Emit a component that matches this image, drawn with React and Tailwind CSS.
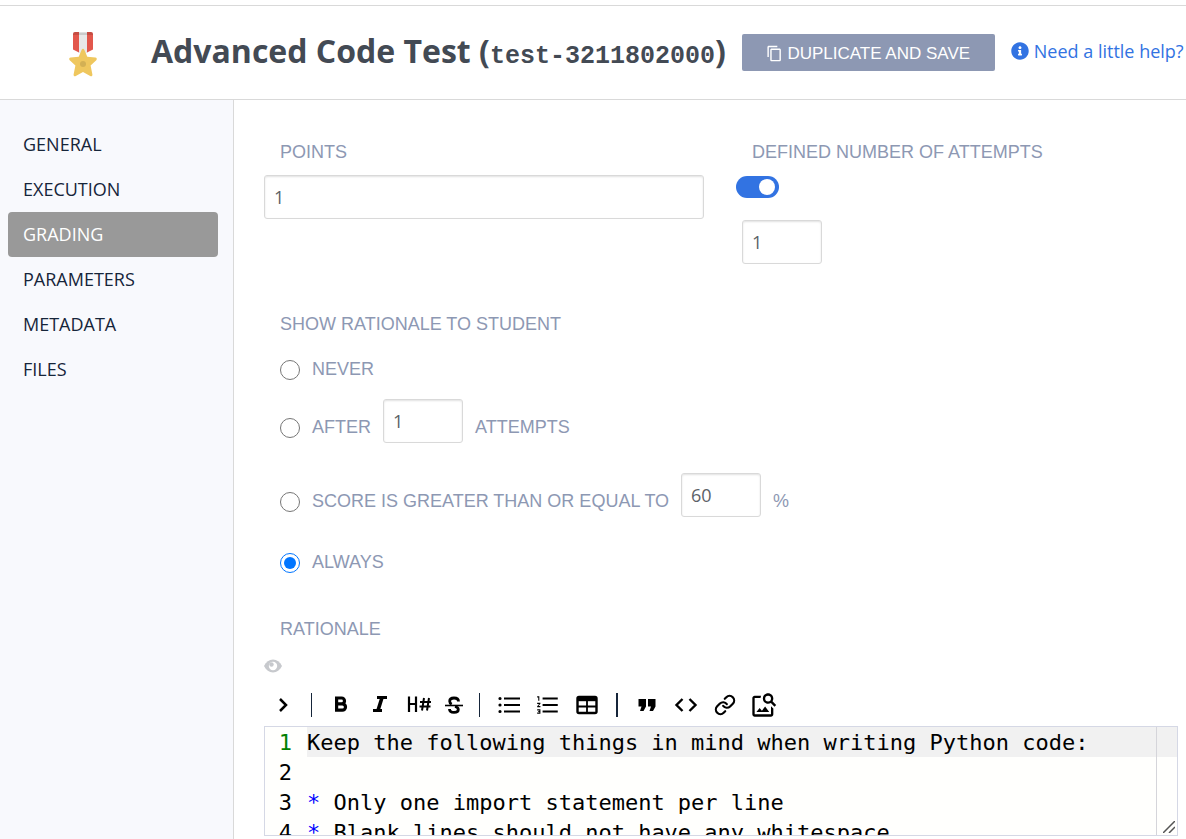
import React, { useState } from "react";
import { MdContentCopy, MdFormatListNumbered, MdImageSearch } from "react-icons/md";
import { FaInfoCircle } from "react-icons/fa";
import { FiLink } from "react-icons/fi";

const NAV = ["General", "Execution", "Grading", "Parameters", "Metadata", "Files"];

const LINES = [
  { text: "Keep the following things in mind when writing Python code:" },
  { text: "" },
  { bullet: true, text: " Only one import statement per line" },
  { bullet: true, text: " Blank lines should not have any whitespace" },
];

const LABEL = "font-['Liberation_Sans',Arial,sans-serif] text-lg leading-6 uppercase text-[#8d98b3]";
const RADIO = "mt-0.5 h-5 w-5 accent-[#0075ff]";
const FIELD =
  "h-11 rounded-[3px] border border-[#d9d9d9] bg-white px-[9px] text-lg text-[#5c6268] shadow-[inset_0_1px_2px_rgba(0,0,0,0.12)] outline-none";

function Medal() {
  return (
    <svg className="mt-1 h-12 w-8" viewBox="0 0 32 48" aria-hidden="true">
      <path d="M8 2h16v16.500l-5 4h-6l-5-4z" fill="#e8e8e8" />
      <path d="M6 3a2 2 0 0 1 2-2h4v20.500L6 18.500zM26 3a2 2 0 0 0-2-2h-4v20.500l6-3z" fill="#e2574c" />
      <path d="M6 3a2 2 0 0 1 2-2h16a2 2 0 0 1 2 2v1H6z" fill="#000" opacity=".12" />
      <path
        d="M14.700 18.800c.600-1.400 2-1.400 2.600 0l3 7 8 .8c1.500.2 2 1.600 1 2.600l-5.700 5.200 1.800 9.200c.2 1.500-1 2.200-2.200 1.500L16 41l-7.200 4.100c-1.200.7-2.400 0-2.200-1.500l1.800-9.200-5.700-5.200c-1-1-.5-2.400 1-2.600l8-.8z"
        fill="#efc75e"
      />
      <circle cx="16" cy="33" r="3" fill="#d3b054" />
    </svg>
  );
}

function Divider({ thick }) {
  return <span className={thick ? "mx-1 h-6 w-0.5 bg-[#16253a]" : "mx-1 h-6 w-px bg-[#16253a]"} />;
}

function Tool({ label, narrow, children }) {
  return (
    <button
      type="button"
      aria-label={label}
      className={
        narrow
          ? "flex h-7 w-5 items-center justify-center text-black"
          : "flex h-7 w-7 items-center justify-center text-black"
      }
    >
      {children}
    </button>
  );
}

function Toolbar() {
  return (
    <div className="flex h-[43px] items-center gap-[11px] pl-1" role="toolbar" aria-label="Formatting">
      <Tool label="Collapse">
        <svg className="h-6 w-6" viewBox="0 0 24 24" fill="none" stroke="currentColor" strokeWidth="2.500">
          <path d="M10 6l6 6-6 6" />
        </svg>
      </Tool>
      <Divider />
      <Tool label="Bold">
        <svg className="h-6 w-6" viewBox="0 0 24 24" fill="none" stroke="currentColor" strokeWidth="3.200">
          <path d="M7.600 5h5a2.900 2.900 0 0 1 0 5.800h-5zM7.600 10.800h5.700a3.200 3.200 0 0 1 0 6.400H7.600z" />
        </svg>
      </Tool>
      <Tool label="Italic">
        <svg className="h-6 w-6" viewBox="0 0 24 24" fill="none" stroke="currentColor">
          <path d="M9 4.500h10M5 17.500h9" strokeWidth="3" />
          <path d="M14 4.500l-4 13" strokeWidth="3.600" />
        </svg>
      </Tool>
      <Tool label="Heading">
        <svg className="h-6 w-6 shrink-0" viewBox="0 0 24 24" fill="none" stroke="currentColor" strokeWidth="2.200">
          <path d="M2 3.500V19M9 3.500V19M2 11h7" />
          <path d="M17 5l-2 12.500M22 5l-2 12.500M13 9h11M12.500 13.500h11" strokeWidth="2" />
        </svg>
      </Tool>
      <Tool label="Strikethrough" narrow>
        <svg className="h-6 w-6 shrink-0" viewBox="0 0 24 24" fill="none" stroke="currentColor">
          <path d="M3 12.500h18" strokeWidth="1.600" />
          <path
            d="M16.500 8.500c0-2.300-1.800-3.500-4.500-3.500s-4.300 1.300-4.300 3.200c0 1.500.8 2.400 2 3M13 13.500c2 .5 3.300 1.300 3.300 2.900 0 2-1.800 3-4.300 3s-4.500-1.200-4.500-3.400"
            strokeWidth="2.800"
          />
        </svg>
      </Tool>
      <Divider />
      <Tool label="Bulleted list">
        <svg className="h-6 w-6" viewBox="0 0 24 24" fill="none" stroke="currentColor" strokeWidth="2">
          <path d="M7 5.500h16M7 12h16M7 18.500h16" />
          <path d="M3 5.500h.01M3 12h.01M3 18.500h.01" strokeWidth="3.200" strokeLinecap="round" />
        </svg>
      </Tool>
      <Tool label="Numbered list"><MdFormatListNumbered size={26} /></Tool>
      <Tool label="Table">
        <svg className="h-6 w-6" viewBox="0 0 24 24" fill="none" stroke="currentColor" strokeWidth="2.400">
          <rect x="2.500" y="4" width="19" height="16" rx="1.500" />
          <path d="M3 6h18" strokeWidth="4.400" />
          <path d="M3 13.500h18M12 8v12" strokeWidth="1.800" />
        </svg>
      </Tool>
      <Divider thick />
      <Tool label="Quote">
        <svg className="h-6 w-6" viewBox="0 0 24 24" fill="currentColor">
          <path d="M3.500 6h7.500v7.500L8.500 18H5l1.500-4.500h-3zM13 6h7.500v7.500L18 18h-3.500l1.500-4.500h-3z" />
        </svg>
      </Tool>
      <Tool label="Code">
        <svg className="h-6 w-6" viewBox="0 0 24 24" fill="none" stroke="currentColor" strokeWidth="2.400">
          <path d="M8.500 6l-6 6 6 6M15.500 6l6 6-6 6" />
        </svg>
      </Tool>
      <Tool label="Link"><FiLink size={22} strokeWidth={2.400} /></Tool>
      <Tool label="Image"><MdImageSearch size={28} /></Tool>
    </div>
  );
}

function Editor() {
  return (
    <div
      role="textbox"
      aria-label="Rationale"
      aria-multiline="true"
      className="relative h-[110px] overflow-hidden border border-[#d5d8e5] bg-[#fffffd] font-['DejaVu_Sans_Mono',monospace] text-[22px] text-black"
    >
      {LINES.map((line, i) => (
        <div key={i} className="flex h-[30px] leading-8 whitespace-pre">
          <span className={i === 0 ? "w-[42px] shrink-0 pr-[15px] text-right text-[#008000]" : "w-[42px] shrink-0 pr-[15px] text-right"}>
            {i + 1}
          </span>
          <span className={i === 0 ? "flex-1 bg-[#f1f1f1]" : "flex-1"}>
            {line.bullet && <span className="text-[#0000ff]">*</span>}
            {line.text}
          </span>
        </div>
      ))}
      <span className="absolute inset-y-0 right-5 w-px bg-[#d5d5da]" />
      <svg className="absolute right-0.5 bottom-0.5 h-3 w-3" viewBox="0 0 12 12" stroke="#555" strokeWidth="1.500" aria-hidden="true">
        <path d="M0 12L12 0M6 12l6-6" />
      </svg>
    </div>
  );
}

export default function App() {
  const [section, setSection] = useState("Grading");
  return (
    <div className="flex min-h-screen flex-col bg-white pt-[5px] font-['Open_Sans',sans-serif]">
      <header className="flex h-[95px] items-center border-y border-[#d9d9d9]">
        <div className="ml-[67px] flex w-[84px] shrink-0">
          <Medal />
        </div>
        <h1 className="mb-1 text-[32px] leading-10 font-bold whitespace-nowrap text-[#434a54]">
          Advanced Code Test (<code className="font-['Liberation_Mono',monospace] text-[25px] leading-none">test-3211802000</code>)
        </h1>
        <button
          type="button"
          className="ml-4 flex h-[37px] w-[253px] shrink-0 items-center justify-center gap-1 rounded-xs bg-[#8d98b3] pt-0.5 font-['Liberation_Sans',Arial,sans-serif] text-[17px] whitespace-nowrap text-white uppercase"
        >
          <MdContentCopy size={17} />
          Duplicate and save
        </button>
        <a href="#help" className="mb-1 ml-4 flex shrink-0 items-center gap-[5px] text-lg whitespace-nowrap text-[#3273e2]">
          <FaInfoCircle size={18} />
          Need a little help?
        </a>
      </header>

      <div className="flex flex-1">
        <nav className="w-[234px] shrink-0 border-r border-[#d9d9d9] bg-[#f8f9fd] pt-[22px] pr-[15px] pl-2">
          {NAV.map((item) => (
            <a
              key={item}
              href={`#${item.toLowerCase()}`}
              onClick={() => setSection(item)}
              className={
                item === section
                  ? "flex h-[45px] items-center rounded-[4px] bg-[#999999] px-[15px] pb-0.5 text-lg text-white uppercase"
                  : "flex h-[45px] items-center rounded-[4px] px-[15px] pb-0.5 text-lg text-[#16253a] uppercase"
              }
            >
              {item}
            </a>
          ))}
        </nav>

        <main className="min-w-0 flex-1 pt-10 pr-2 pl-[30px]">
          <div className="grid grid-cols-2 gap-8 pr-0.5">
            <div>
              <label htmlFor="points" className={`block pl-4 ${LABEL}`}>Points</label>
              <input id="points" type="text" defaultValue="1" className={`mt-[11px] w-full ${FIELD}`} />
            </div>
            <div>
              <label htmlFor="limited" className={`block pl-4 ${LABEL}`}>Defined number of attempts</label>
              <input
                id="limited"
                type="checkbox"
                role="switch"
                defaultChecked
                className="mt-3 flex h-[22px] w-[43px] appearance-none items-center rounded-full bg-[#b5b5b5] px-1 before:h-4 before:w-4 before:rounded-full before:bg-white checked:justify-end checked:bg-[#3273e2]"
              />
              <input type="text" aria-label="Number of attempts" defaultValue="1" className={`mt-[22px] ml-1.5 w-20 ${FIELD}`} />
            </div>
          </div>

          <fieldset className="mt-12 pl-4">
            <legend className={LABEL}>Show rationale to student</legend>
            <div className="mt-[21px] flex h-6 items-center gap-3">
              <input id="never" type="radio" name="show" className={RADIO} />
              <label htmlFor="never" className={LABEL}>Never</label>
            </div>
            <div className="mt-[18px] flex items-end gap-3">
              <div className="flex h-8 items-center gap-3">
                <input id="after" type="radio" name="show" className={RADIO} />
                <label htmlFor="after" className={LABEL}>After</label>
              </div>
              <input id="after-count" type="text" aria-label="Attempts before showing" defaultValue="1" className={`w-20 ${FIELD}`} />
              <label htmlFor="after-count" className={`pb-1 ${LABEL}`}>Attempts</label>
            </div>
            <div className="mt-[30px] flex items-end gap-3">
              <div className="flex h-8 items-center gap-3">
                <input id="score" type="radio" name="show" className={RADIO} />
                <label htmlFor="score" className={LABEL}>Score is greater than or equal to</label>
              </div>
              <input id="score-min" type="text" aria-label="Minimum score" defaultValue="60" className={`w-20 ${FIELD}`} />
              <label htmlFor="score-min" className={`pb-1 ${LABEL}`}>%</label>
            </div>
            <div className="mt-[33px] flex h-6 items-center gap-3">
              <input id="always" type="radio" name="show" defaultChecked className={RADIO} />
              <label htmlFor="always" className={LABEL}>Always</label>
            </div>
          </fieldset>

          <h2 className={`mt-[43px] pl-4 ${LABEL}`}>Rationale</h2>
          <button type="button" aria-label="Preview" className="mt-4 block text-[#c7c9cd]">
            <svg className="h-[18px] w-[18px]" viewBox="0 0 18 18" aria-hidden="true">
              <path d="M0 9c2-4.300 5.200-6.500 9-6.500S16 4.700 18 9c-2 4.300-5.200 6.500-9 6.500S2 13.300 0 9z" fill="currentColor" />
              <circle cx="9" cy="9" r="4.200" fill="#fff" />
              <circle cx="7.500" cy="7.500" r="2.200" fill="currentColor" />
            </svg>
          </button>
          <div className="mt-2">
            <Toolbar />
            <Editor />
          </div>
        </main>
      </div>
    </div>
  );
}
